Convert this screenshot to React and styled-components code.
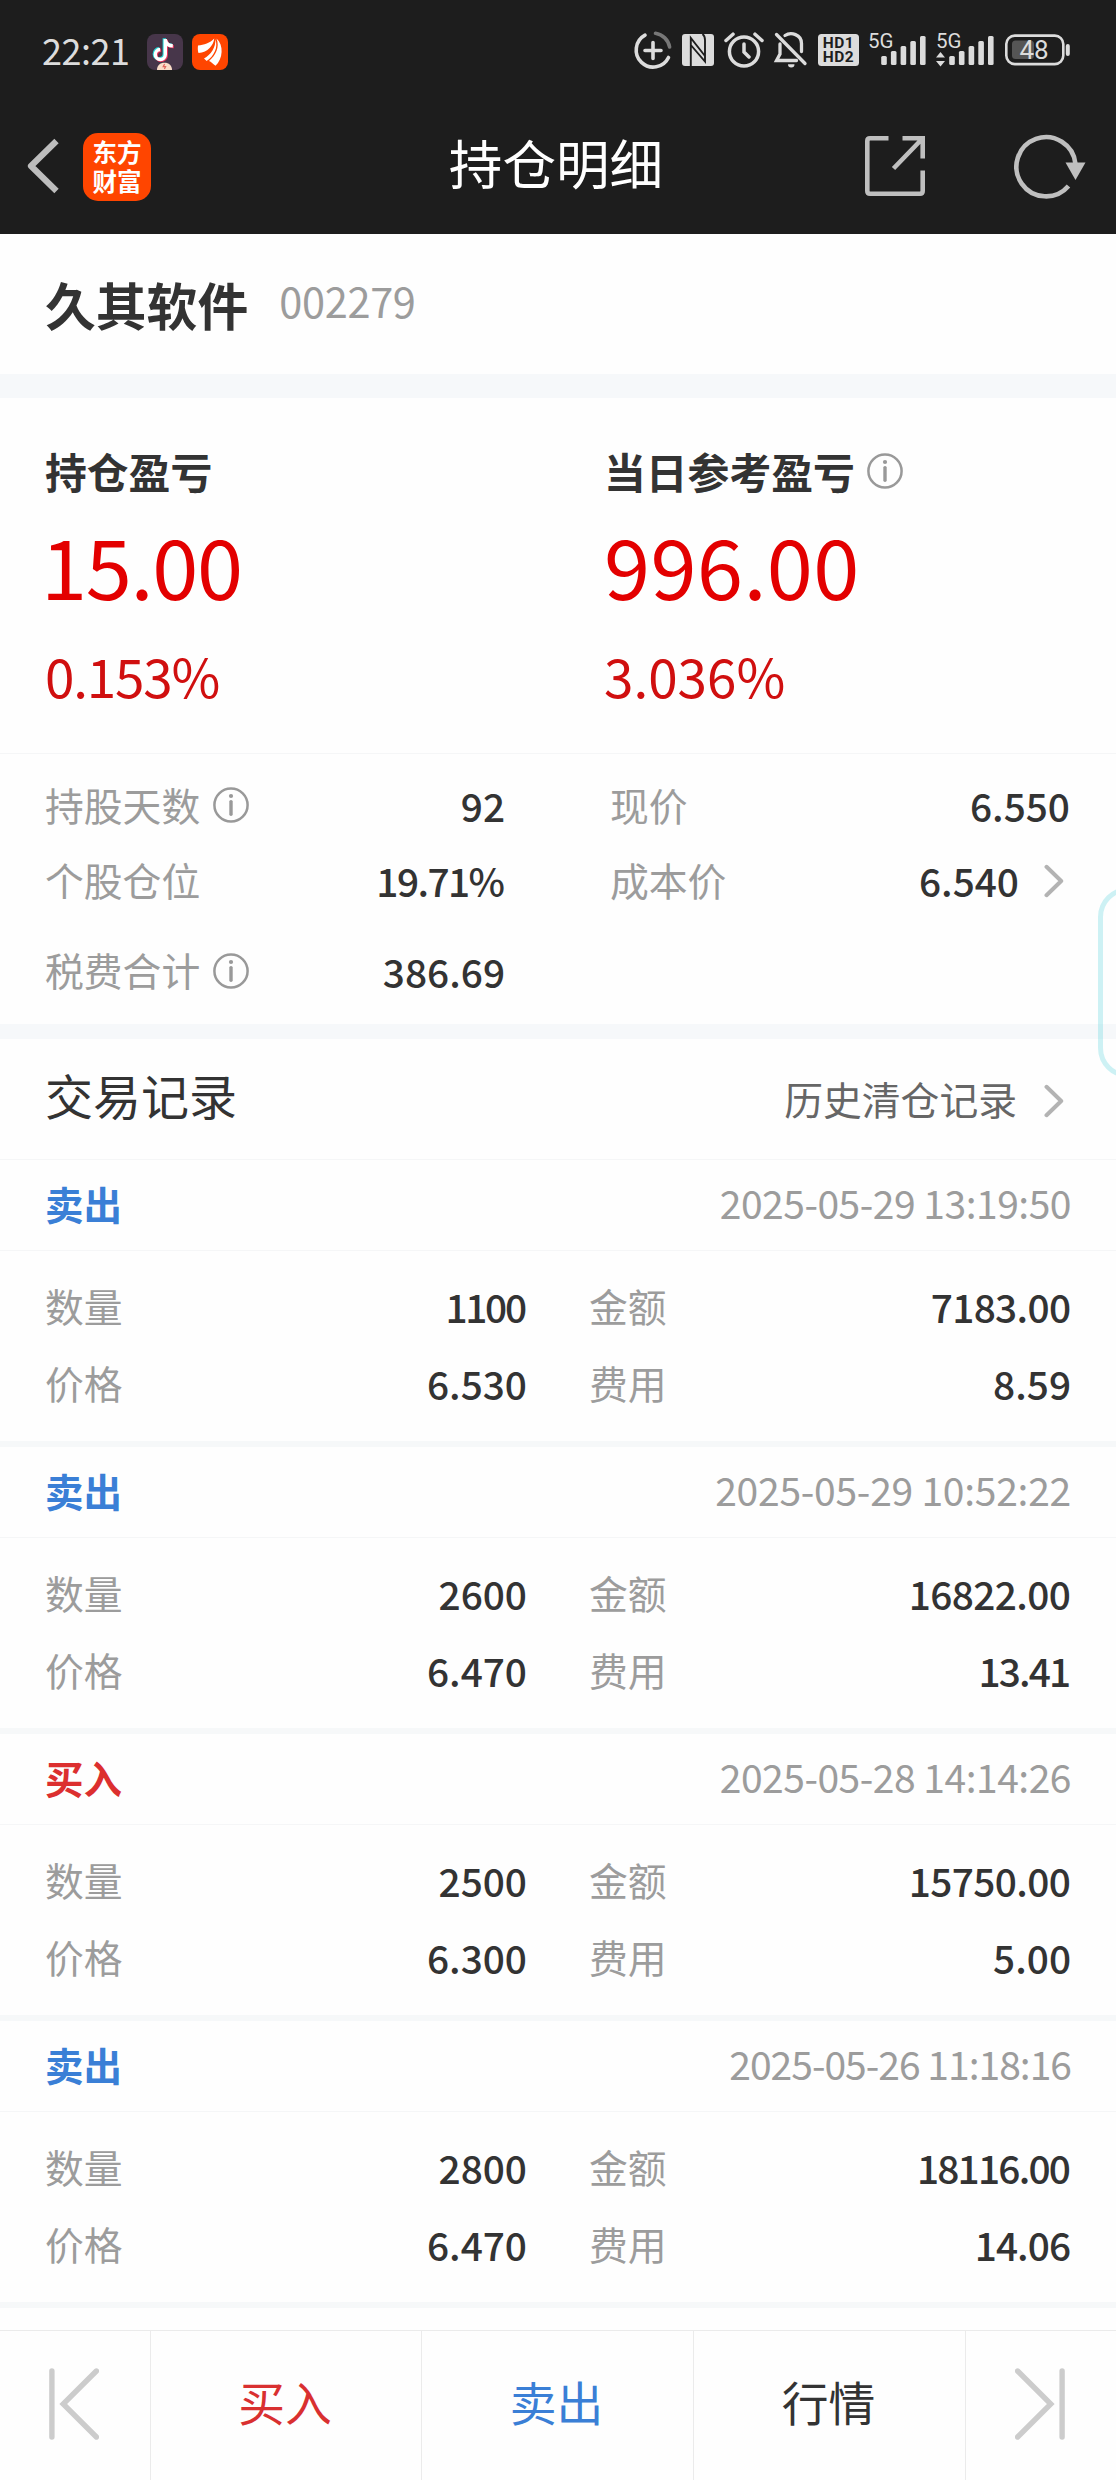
import React from 'react';
import styled, { createGlobalStyle } from 'styled-components';

const Global = createGlobalStyle`
  * { box-sizing: border-box; }
  html, body { margin: 0; padding: 0; background: #fefefe; }
  body { font-family: "Noto Sans CJK SC", "Noto Sans", sans-serif; color: #333; }
`;

/* The digit 1 takes less room than the others, so spread the difference over the string. */
const tracking = (text, size, base = 0) => {
  const ones = (text.match(/1/g) || []).length;
  return `${(base - (ones * size * 0.12) / text.length).toFixed(2)}px`;
};

const Screen = styled.div`
  position: relative;
  width: 1116px;
  height: 2480px;
  display: flex;
  flex-direction: column;
  overflow: hidden;
  background: #fefefe;
`;

const Header = styled.header`
  height: 234px;
  background: #1d1d1d;
`;

const StatusBar = styled.div`
  height: 100px;
  padding: 0 45px 0 42px;
  display: flex;
  align-items: center;
  justify-content: space-between;
`;

const StatusLeft = styled.div`
  display: flex;
  align-items: center;
`;

const Clock = styled.span`
  width: 105px;
  padding-bottom: 3px;
  font-size: 36px;
  line-height: 44px;
  letter-spacing: -0.5px;
  color: #dcdcdc;
`;

const AppBadges = styled.div`
  display: flex;
  gap: 9px;
  padding-top: 4px;
`;

const StatusIcons = styled.div`
  display: flex;
  align-items: center;
  svg { display: block; flex: none; overflow: visible; }
`;

const NavBar = styled.nav`
  height: 134px;
  padding: 0 30px 4px 26px;
  display: grid;
  grid-template-columns: 1fr 220px 1fr;
  align-items: center;
  svg { display: block; }
`;

const NavStart = styled.div`
  display: flex;
  align-items: center;
  gap: 23px;
  svg { margin-top: 2px; }
`;

const NavEnd = styled.div`
  display: flex;
  justify-content: flex-end;
  align-items: center;
  gap: 88px;
  padding-top: 1px;
`;

const Brand = styled.div`
  width: 68px;
  height: 68px;
  margin-top: 4px;
  padding-top: 4px;
  border-radius: 15px;
  background: #ff4500;
  color: #fff;
  font-size: 24.5px;
  font-weight: 700;
  line-height: 29px;
  text-align: center;
`;

const Title = styled.h1`
  margin: 0 0 6px;
  font-size: 53.6px;
  font-weight: 400;
  line-height: 70px;
  color: #fff;
  text-align: center;
  white-space: nowrap;
`;

const StockRow = styled.section`
  height: 140px;
  padding: 0 45px;
  display: flex;
  align-items: center;
  gap: 31px;
`;

const StockName = styled.h2`
  margin: 0;
  font-size: 50.8px;
  font-weight: 700;
  line-height: 70px;
  color: #333;
`;

const StockCode = styled.span`
  font-size: 41.5px;
  font-weight: 400;
  line-height: 60px;
  letter-spacing: -0.3px;
  padding-bottom: 8px;
  color: #9c9c9c;
`;

const Band = styled.div`
  flex: none;
  height: ${(p) => p.$h}px;
  background: #f6f8fa;
`;

const ProfitPanel = styled.section`
  height: 356px;
  padding: 42px 0 0 45px;
  display: grid;
  grid-template-columns: 559px 1fr;
  border-bottom: 1px solid #f5f6f7;
`;

const ProfitLabel = styled.div`
  height: 62px;
  margin-bottom: -2px;
  display: flex;
  align-items: center;
  gap: 12px;
  font-size: 41.8px;
  font-weight: 700;
  color: #333;
`;

const ProfitValue = styled.div`
  height: 100px;
  margin-top: 14px;
  margin-left: ${(p) => p.$shift || 0}px;
  font-size: 83px;
  line-height: 100px;
  letter-spacing: ${(p) => p.$ls};
  color: #e30000;
`;

const ProfitRate = styled.div`
  height: 70px;
  margin-top: 26px;
  font-size: 53px;
  line-height: 70px;
  letter-spacing: ${(p) => p.$ls};
  color: #d00f0f;
`;

const Facts = styled.section`
  height: 270px;
  padding: 12px 46px 0 45px;
  display: grid;
  grid-template-columns: 460px 460px;
  column-gap: 105px;
  grid-template-rows: 75px 75px 106px;
`;

const Fact = styled.div`
  display: flex;
  align-items: center;
  justify-content: space-between;
`;

const FactLabel = styled.span`
  display: flex;
  align-items: center;
  gap: 13px;
  font-size: 38.8px;
  font-weight: 400;
  line-height: 56px;
  color: #9c9c9c;
  svg { margin-top: 3px; }
`;

const Number = styled.span`
  font-size: 38.8px;
  font-weight: 500;
  line-height: 56px;
  padding-top: 3px;
  letter-spacing: ${(p) => p.$ls};
  margin-right: calc(0px - ${(p) => p.$ls});
  color: #333;
`;

const WithArrow = styled.span`
  display: flex;
  align-items: center;
  gap: 25px;
  padding-right: 6px;
  svg { margin-top: 4px; }
`;

const SectionHead = styled.div`
  height: 121px;
  padding: 0 52px 8px 45px;
  display: flex;
  align-items: center;
  justify-content: space-between;
  border-bottom: 1px solid #f5f6f7;
`;

const SectionTitle = styled.h3`
  margin: 0 0 2px;
  font-size: 48px;
  font-weight: 400;
  line-height: 66px;
`;

const HistoryLink = styled.a`
  display: flex;
  align-items: center;
  gap: 27px;
  padding-top: 6px;
  font-size: 38.8px;
  line-height: 56px;
  color: #666;
  svg { margin-top: 5px; }
`;

const Record = styled.article`
  flex: none;
  height: 287px;
  border-bottom: 6px solid #f6f8f9;
`;

const RecordHead = styled.div`
  height: 91px;
  padding: 0 45px 4px 45px;
  display: flex;
  align-items: center;
  justify-content: space-between;
  border-bottom: 1px solid #f5f6f7;
`;

const Side = styled.span`
  font-size: 38.5px;
  font-weight: 700;
  line-height: 56px;
  color: ${(p) => (p.$buy ? '#dc2f2f' : '#3a7fd6')};
`;

const Timestamp = styled.time`
  font-size: 39px;
  font-weight: 400;
  line-height: 56px;
  letter-spacing: ${(p) => p.$ls};
  padding-bottom: 3px;
  color: #9c9c9c;
`;

const RecordBody = styled.div`
  height: 190px;
  padding: 15px 45px 0 45px;
  display: grid;
  grid-template-columns: 482px 482px;
  column-gap: 62px;
  grid-template-rows: 77px 77px;
`;

const Spacer = styled.div`
  flex: 1;
`;

const ActionBar = styled.footer`
  flex: none;
  height: 150px;
  display: grid;
  grid-template-columns: 151px 271px 272px 272px 150px;
  border-top: 1px solid #ebebeb;
`;

const Action = styled.button`
  display: flex;
  align-items: center;
  justify-content: center;
  padding: 0 2px 10px 0;
  border: 0;
  border-right: ${(p) => (p.$last ? '0' : '1px solid #ebebeb')};
  background: none;
  font-family: inherit;
  font-size: 46.8px;
  color: ${(p) => p.$color || '#333'};
  svg { margin-top: 7px; }
`;

const EdgeHandle = styled.div`
  position: absolute;
  left: 1098px;
  top: 887px;
  width: 60px;
  height: 191px;
  border: 5px solid rgba(80, 210, 218, 0.28);
  border-radius: 30px;
`;

const Info = () => (
  <svg width="36" height="36" viewBox="0 0 36 36" fill="none">
    <circle cx="18" cy="18" r="16.6" stroke="#999" strokeWidth="2.5" />
    <circle cx="18" cy="9" r="2.1" fill="#999" />
    <path d="M18 14.6v12.6" stroke="#999" strokeWidth="3.4" strokeLinecap="round" />
  </svg>
);

const Chevron = () => (
  <svg width="20" height="34" viewBox="0 0 20 34" fill="none">
    <path d="M2.5 2.8 17.2 17 2.5 31.2" stroke="#b3b3b3" strokeWidth="4" strokeLinecap="round" strokeLinejoin="round" />
  </svg>
);

const Skip = ({ flip }) => (
  <svg width="50" height="72" viewBox="0 0 50 72" fill="none" stroke="#ccc" strokeWidth="5.4" strokeLinecap="round">
    <g transform={flip ? 'matrix(-1 0 0 1 50 0)' : undefined}>
      <path d="M2.9 3v66M47.4 3 14.2 36l33.2 33" />
    </g>
  </svg>
);

const NoteBadge = () => (
  <svg width="36" height="36" viewBox="0 0 36 36" fill="none">
    <rect width="36" height="36" rx="8" fill="#47364a" />
    <g strokeWidth="3.4">
      <path d="M18.3 5v15.5a5 5 0 1 1-5.2-5M18.3 6c1 4 4 5.8 7.5 5.8" stroke="#25d8d8" transform="translate(-1 -.7)" />
      <path d="M18.3 5v15.5a5 5 0 1 1-5.2-5M18.3 6c1 4 4 5.8 7.5 5.8" stroke="#e8335c" transform="translate(1 .8)" />
      <path d="M18.3 5v15.5a5 5 0 1 1-5.2-5M18.3 6c1 4 4 5.8 7.5 5.8" stroke="#fff" />
    </g>
    <path d="M10 36c0-4.5 3-7.2 7.5-7.2S25 31.5 25 36Z" fill="#f9dcc8" />
    <path d="m17.6 30-1.4 2.6h2.4l-1.2 2.4" stroke="#e0655d" strokeWidth="1.2" />
  </svg>
);

const WingBadge = () => (
  <svg width="36" height="36" viewBox="0 0 36 36" fill="#fff">
    <rect width="36" height="36" rx="8" fill="#ff4500" />
    <path d="M6 11.5C12 11 18 9 22.3 4.5 21.5 11 16 18.5 6.5 19c-.8-2.5-.8-5-.5-7.5Z" />
    <path d="M23.3 5c.8 8-4.5 16-11.3 19.5l2.7 2.5C22 22 26.5 13.5 23.3 5Z" />
    <path d="M24.5 4.5c3.5 9-1 17-7.5 22.5 2.5.5 3.5 3 6.5 4.8C31 25 32 11 24.5 4.5Z" />
  </svg>
);

const Back = () => (
  <svg width="34" height="56" viewBox="0 0 34 56" fill="none">
    <path d="M30.5 3 5 28l25.5 25" stroke="#bdbdbd" strokeWidth="6.2" strokeLinejoin="round" />
  </svg>
);

const Share = () => (
  <svg width="62" height="62" viewBox="0 0 62 62" fill="none" stroke="#bfbfbf" strokeWidth="4.6">
    <path d="M24.5 3.3H6Q3.3 3.3 3.3 6v50q0 2.7 2.7 2.7h50q2.7 0 2.7-2.7V35.5M38.5 3.3h20.2v20.2M58 4 29.5 33.5" />
  </svg>
);

const Refresh = () => (
  <svg width="72" height="66" viewBox="0 0 72 66" fill="none">
    <path d="M54.5 53A29.6 29.6 0 1 1 61.5 31" stroke="#bfbfbf" strokeWidth="4.6" />
    <path d="M51.5 29.5h20L61.5 47Z" fill="#bfbfbf" />
  </svg>
);

const ink = '#dcdcdc';

const DataSaver = () => (
  <svg width="38" height="38" viewBox="0 0 38 38" fill="none" stroke={ink} strokeWidth="3.6" strokeLinecap="round">
    <path d="M11 4.2A17 17 0 1 0 34.5 26.5" />
    <path d="M21.5 2.2A17 17 0 0 1 35.6 16" stroke="#777" />
    <path d="M19 11.5v16M11 19.5h16" />
  </svg>
);

const Nfc = () => (
  <svg width="32" height="32" viewBox="0 0 32 32" fill="none">
    <rect width="32" height="32" rx="3" fill={ink} />
    <path d="M8.8 32V4L23 22M8.8 11 23 27.5V6Q23 2 20.5 0" stroke="#1d1d1d" strokeWidth="1.9" />
  </svg>
);

const Alarm = () => (
  <svg width="40" height="38" viewBox="0 0 40 38" fill="none" stroke={ink} strokeWidth="3.5" strokeLinecap="round">
    <circle cx="20" cy="20.5" r="14.6" />
    <path d="M2 9.5 9 3.2M38 9.5 31 3.2M20 13v8l5 5" />
  </svg>
);

const Muted = () => (
  <svg width="34" height="38" viewBox="0 0 34 38" fill="none" stroke={ink} strokeWidth="3.3" strokeLinecap="round">
    <path d="M2.5 3.5 31 32.5M6 13v10l-3.5 6.5h20M11 4.5C17 .5 27.5 3.5 27.5 12.5v8" />
    <path d="M14 33.2h6.5a3.2 3.2 0 0 1-6.5 0Z" fill={ink} stroke="none" />
  </svg>
);

const HdChip = styled.span`
  width: 41px;
  height: 32px;
  padding: 2px 0;
  border-radius: 3.5px;
  display: grid;
  grid-template-rows: 14px 14px;
  justify-items: center;
  background: ${ink};
  color: #1d1d1d;
  font-family: Roboto, sans-serif;
  font-size: 15.5px;
  font-weight: 700;
  line-height: 14px;
  letter-spacing: 0.6px;
`;

const StatusText = styled.text`
  font-family: Roboto, sans-serif;
  font-size: ${(p) => p.$size}px;
  font-weight: 400;
  fill: ${ink};
`;

const Hd = () => (
  <HdChip>
    <span>HD1</span>
    <span>HD2</span>
  </HdChip>
);

const Signal = ({ data }) => (
  <svg width="59" height="42" viewBox="0 -4 59 42">
    <StatusText x="0" y="15" $size={20.5}>5G</StatusText>
    {data && <path d="M0 24.5 4.5 19l4.5 5.5ZM0 28l4.5 5.5L9 28Z" fill={ink} />}
    {[0, 1, 2, 3, 4].map((i) => (
      <rect key={i} x={13.2 + i * 9.7} y={23 - i * 5} width="5.6" height={9 + i * 5} rx="1.5" fill={ink} />
    ))}
  </svg>
);

const Battery = () => (
  <svg width="66" height="34" viewBox="0 -1 66 34" fill="none">
    <rect x="1.3" y="1.6" width="57" height="28.5" rx="8.5" stroke={ink} strokeWidth="2.6" />
    <rect x="7" y="6.5" width="22" height="18.5" rx="3.5" fill="#555" />
    <rect x="60.8" y="10" width="4" height="12" rx="2" fill={ink} />
    <StatusText x="14.5" y="25" $size={26}>48</StatusText>
  </svg>
);

const Pad = styled.span`
  flex: none;
  width: ${(p) => p.$w}px;
`;

const Value = ({ children }) => <Number $ls={tracking(children, 39)}>{children}</Number>;

const Pair = ({ label, value, info, arrow }) => (
  <Fact>
    <FactLabel>
      {label}
      {info && <Info />}
    </FactLabel>
    {arrow ? (
      <WithArrow>
        <Value>{value}</Value>
        <Chevron />
      </WithArrow>
    ) : (
      <Value>{value}</Value>
    )}
  </Fact>
);

const records = [
  { side: '卖出', time: '2025-05-29 13:19:50', qty: '1100', amount: '7183.00', price: '6.530', fee: '8.59' },
  { side: '卖出', time: '2025-05-29 10:52:22', qty: '2600', amount: '16822.00', price: '6.470', fee: '13.41' },
  { side: '买入', time: '2025-05-28 14:14:26', qty: '2500', amount: '15750.00', price: '6.300', fee: '5.00' },
  { side: '卖出', time: '2025-05-26 11:18:16', qty: '2800', amount: '18116.00', price: '6.470', fee: '14.06' },
];

export default function App() {
  return (
    <Screen>
      <Global />
      <Header>
        <StatusBar>
          <StatusLeft>
            <Clock>22:21</Clock>
            <AppBadges>
              <NoteBadge />
              <WingBadge />
            </AppBadges>
          </StatusLeft>
          <StatusIcons>
            <DataSaver />
            <Pad $w={10} />
            <Nfc />
            <Pad $w={10} />
            <Alarm />
            <Pad $w={10} />
            <Muted />
            <Pad $w={10} />
            <Hd />
            <Pad $w={9} />
            <Signal />
            <Pad $w={9} />
            <Signal data />
            <Pad $w={10} />
            <Battery />
          </StatusIcons>
        </StatusBar>
        <NavBar>
          <NavStart>
            <Back />
            <Brand>
              东方
              <br />
              财富
            </Brand>
          </NavStart>
          <Title>持仓明细</Title>
          <NavEnd>
            <Share />
            <Refresh />
          </NavEnd>
        </NavBar>
      </Header>

      <StockRow>
        <StockName>久其软件</StockName>
        <StockCode>002279</StockCode>
      </StockRow>
      <Band $h={24} />

      <ProfitPanel>
        <div>
          <ProfitLabel>持仓盈亏</ProfitLabel>
          <ProfitValue $ls="-1.3px" $shift={-4}>15.00</ProfitValue>
          <ProfitRate $ls="-1.2px">0.153%</ProfitRate>
        </div>
        <div>
          <ProfitLabel>
            当日参考盈亏
            <Info />
          </ProfitLabel>
          <ProfitValue $ls="0.4px">996.00</ProfitValue>
          <ProfitRate $ls="0px">3.036%</ProfitRate>
        </div>
      </ProfitPanel>

      <Facts>
        <Pair label="持股天数" value="92" info />
        <Pair label="现价" value="6.550" />
        <Pair label="个股仓位" value="19.71%" />
        <Pair label="成本价" value="6.540" arrow />
        <Pair label="税费合计" value="386.69" info />
      </Facts>
      <Band $h={15} />

      <SectionHead>
        <SectionTitle>交易记录</SectionTitle>
        <HistoryLink>
          历史清仓记录
          <Chevron />
        </HistoryLink>
      </SectionHead>

      {records.map((r) => (
        <Record key={r.time}>
          <RecordHead>
            <Side $buy={r.side === '买入'}>{r.side}</Side>
            <Timestamp $ls={tracking(r.time, 39)}>{r.time}</Timestamp>
          </RecordHead>
          <RecordBody>
            <Pair label="数量" value={r.qty} />
            <Pair label="金额" value={r.amount} />
            <Pair label="价格" value={r.price} />
            <Pair label="费用" value={r.fee} />
          </RecordBody>
        </Record>
      ))}

      <Spacer />
      <ActionBar>
        <Action aria-label="上一只">
          <Skip />
        </Action>
        <Action $color="#d93030">买入</Action>
        <Action $color="#3a7fd6">卖出</Action>
        <Action>行情</Action>
        <Action $last aria-label="下一只">
          <Skip flip />
        </Action>
      </ActionBar>
      <EdgeHandle />
    </Screen>
  );
}
